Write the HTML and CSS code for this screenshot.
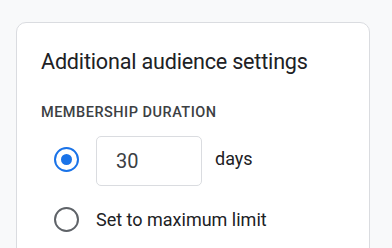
FILE: index.html
```html
<!DOCTYPE html>
<html>
<head>
<meta charset="utf-8">
<link rel="stylesheet" href="styles.css">
</head>
<body>
<div class="card">
  <h2 class="title">Additional audience settings</h2>
  <div class="label">MEMBERSHIP DURATION</div>
  <div class="row row-days">
    <span class="radio checked"></span>
    <div class="input">30</div>
    <span class="unit">days</span>
  </div>
  <div class="row row-max">
    <span class="radio"></span>
    <span class="opt">Set to maximum limit</span>
  </div>
</div>
</body>
</html>
```

FILE: styles.css
```css
html, body {
  margin: 0;
  height: 100%;
  overflow: hidden;
}
body {
  background: #f8f9fa;
  padding: 22px 22px 0 16px;
  box-sizing: border-box;
  font-family: Roboto, "Liberation Sans", sans-serif;
}
.card {
  width: 354px;
  box-sizing: border-box;
  background: #fff;
  border: 1px solid #dadce0;
  border-radius: 10px;
  padding: 24.5px 24px 60px 24px;
}
.title {
  margin: 0;
  font-family: Roboto, sans-serif;
  font-weight: 400;
  font-size: 21.6px;
  letter-spacing: -0.2px;
  line-height: 28px;
  color: #202124;
}
.label {
  margin-top: 27.5px;
  font-size: 14.5px;
  line-height: 20px;
  letter-spacing: 0.5px;
  font-weight: 500;
  color: #3c4043;
}
.row {
  display: flex;
  align-items: flex-start;
}
.row-days {
  margin-top: 13px;
}
.row-max {
  margin-top: 14px;
}
.radio {
  flex: none;
  width: 25px;
  height: 25px;
  box-sizing: border-box;
  border: 2.5px solid #5f6368;
  border-radius: 50%;
  margin-left: 13px;
  margin-right: 17px;
  display: flex;
  align-items: center;
  justify-content: center;
}
.row-days .radio {
  margin-top: 10.5px;
}
.row-max .radio {
  margin-top: 6.5px;
}
.radio.checked {
  border-color: #1a73e8;
}
.radio.checked::after {
  content: "";
  width: 11px;
  height: 11px;
  border-radius: 50%;
  background: #1a73e8;
}
.input {
  width: 106px;
  height: 50px;
  box-sizing: border-box;
  border: 1px solid #dadce0;
  border-radius: 5px;
  padding-left: 19px;
  font-size: 20px;
  line-height: 48px;
  color: #3c4043;
}
.unit {
  margin-left: 13px;
  margin-top: 10.5px;
  font-size: 18px;
  line-height: 24px;
  color: #202124;
}
.opt {
  margin-top: 7.5px;
  font-size: 18px;
  line-height: 24px;
  color: #202124;
}
```
